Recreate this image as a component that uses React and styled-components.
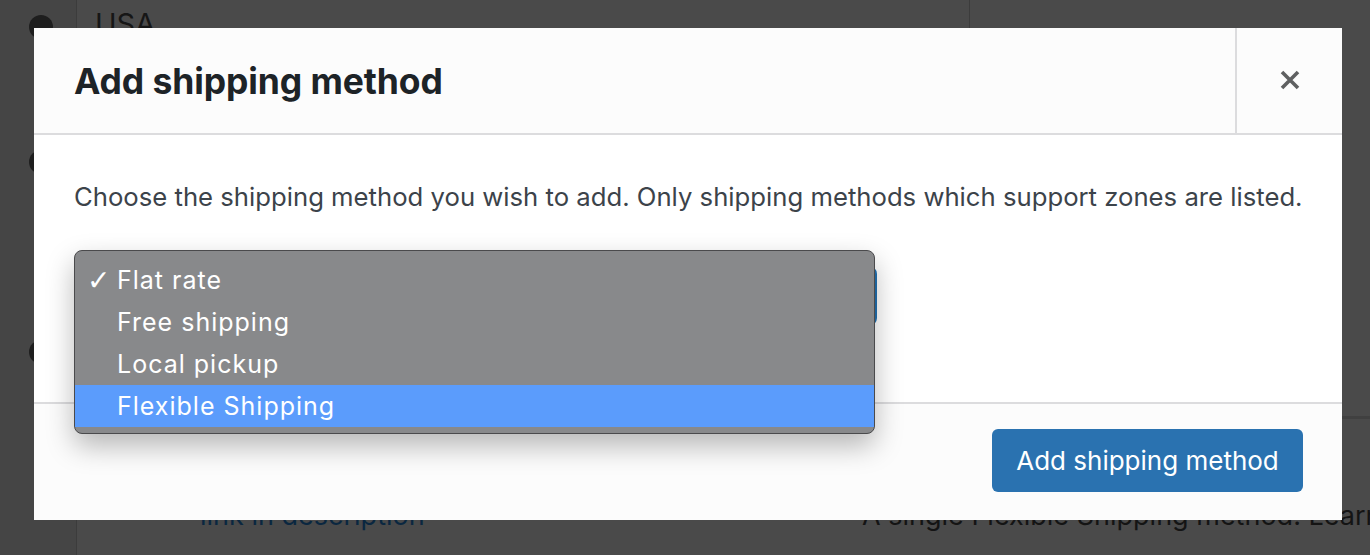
import styled, { createGlobalStyle } from "styled-components"

const GlobalStyle = createGlobalStyle`
  html, body {
    margin: 0;
    padding: 0;
    background: #4a4a4a;
  }
  body {
    font-family: Inter, "Noto Sans", sans-serif;
    width: 1370px;
    height: 555px;
    overflow: hidden;
  }
`

// dimmed admin page behind the modal
const Page = styled.div`
  position: relative;
  width: 1370px;
  height: 555px;
  display: flex;
  background: #4a4a4a;
  overflow: hidden;
`
const Gutter = styled.div`
  width: 77px;
  flex-shrink: 0;
  background: #454545;
  border-right: 1px solid #3c3c3c;
  display: flex;
  flex-direction: column;
  align-items: center;
  padding-top: 15px;
  box-sizing: border-box;
`
const HelpDot = styled.div`
  width: 24px;
  height: 24px;
  border-radius: 50%;
  background: #1e1e1e;
  margin: ${p => p.gap}px 0 0 5px;
`
const Table = styled.div`
  flex: 1;
  min-width: 0;
  display: flex;
  flex-direction: column;
`
const Row = styled.div`
  display: flex;
  height: ${p => p.h}px;
  border-bottom: ${p => (p.line ? "3px solid #404040" : "none")};
  box-sizing: border-box;
`
const Cell = styled.div`
  width: ${p => p.w || "auto"};
  flex: ${p => (p.w ? "none" : 1)};
  min-width: 0;
  padding: ${p => p.pad || "0"};
  border-right: ${p => (p.divider ? "1px solid #3c3c3c" : "none")};
  box-sizing: border-box;
  font-size: ${p => p.size || 27}px;
  color: ${p => p.color || "#161616"};
  white-space: nowrap;
  overflow: hidden;
`

// modal
const Modal = styled.div`
  position: absolute;
  left: 34px;
  top: 28px;
  width: 1308px;
  height: 492px;
  background: #fff;
  display: flex;
  flex-direction: column;
`
const Header = styled.div`
  height: 107px;
  display: flex;
  background: #fcfcfc;
  border-bottom: 2px solid #dcdcde;
  box-sizing: border-box;
`
const Title = styled.h1`
  flex: 1;
  margin: 0;
  padding-left: 40px;
  padding-top: 2px;
  display: flex;
  align-items: center;
  font-size: 35.5px;
  font-weight: 700;
  color: #1d2327;
  letter-spacing: -0.1px;
`
const CloseButton = styled.button`
  width: 107px;
  border: none;
  border-left: 2px solid #dcdcde;
  background: transparent;
  display: flex;
  align-items: center;
  justify-content: center;
  padding: 0 0 2px;
  cursor: pointer;
`
const Body = styled.div`
  position: relative;
  height: 267px;
  padding: 0 40px;
  box-sizing: border-box;
`
const Intro = styled.p`
  margin: 0;
  padding-top: 46px;
  font-size: 25.7px;
  line-height: 32px;
  color: #3c434a;
  white-space: nowrap;
`
const SelectBox = styled.div`
  margin-top: 53px;
  width: 803px;
  height: 60px;
  border: 2px solid #2271b1;
  border-radius: 8px;
  box-sizing: border-box;
`
const Popup = styled.ul`
  position: absolute;
  left: 40px;
  top: 115px;
  width: 801px;
  margin: 0;
  padding: 8px 0 6px;
  list-style: none;
  background: #88898b;
  border: 1px solid #4a4a4c;
  border-radius: 8px;
  box-sizing: border-box;
  box-shadow: 0 12px 28px rgba(0, 0, 0, 0.28);
  z-index: 2;
`
const Option = styled.li`
  height: 42px;
  display: flex;
  align-items: center;
  background: ${p => (p.active ? "#5b9cfc" : "transparent")};
  color: #fff;
  font-size: 25px;
  letter-spacing: 1px;
`
const Check = styled.span`
  width: 42px;
  padding-left: 12px;
  box-sizing: border-box;
  font-size: 28px;
  font-family: "DejaVu Sans", sans-serif;
  letter-spacing: 0;
`
const Footer = styled.div`
  flex: 1;
  background: #fcfcfc;
  border-top: 2px solid #dcdcde;
  display: flex;
  justify-content: flex-end;
  align-items: flex-start;
  padding: 25px 39px 0 0;
`
const PrimaryButton = styled.button`
  width: 311px;
  height: 63px;
  border: none;
  border-radius: 6px;
  background: #2a72b0;
  color: #fff;
  font-family: inherit;
  font-size: 26px;
  padding: 0;
  cursor: pointer;
`

const options = ["Flat rate", "Free shipping", "Local pickup", "Flexible Shipping"]

const App = () => {
  return (
    <>
      <GlobalStyle />
      <Page>
        <Gutter>
          <HelpDot gap={0} />
          <HelpDot gap={111} />
          <HelpDot gap={166} />
        </Gutter>
        <Table>
          <Row h={312}>
            <Cell w="893px" divider pad="6px 0 0 18px" size={29}>USA</Cell>
            <Cell />
          </Row>
          <Row h={107} line>
            <Cell />
          </Row>
          <Row h={136} line={false}>
            <Cell w="785px" pad="80px 0 0 123px" color="#0a2740">link in description</Cell>
            <Cell pad="80px 0 0 0" color="#141414">A single Flexible Shipping method. Learn more</Cell>
          </Row>
        </Table>

        <Modal>
          <Header>
            <Title>Add shipping method</Title>
            <CloseButton aria-label="Close">
              <svg width="22" height="22" viewBox="0 0 22 22">
                <path d="M3 3 L19 19 M19 3 L3 19" stroke="#5f6061" strokeWidth="3.6" strokeLinecap="butt" />
              </svg>
            </CloseButton>
          </Header>
          <Body>
            <Intro>Choose the shipping method you wish to add. Only shipping methods which support zones are listed.</Intro>
            <SelectBox />
            <Popup>
              {options.map((o, i) => (
                <Option key={o} active={i === 3}>
                  <Check>{i === 0 ? "✓" : ""}</Check>
                  {o}
                </Option>
              ))}
            </Popup>
          </Body>
          <Footer>
            <PrimaryButton>Add shipping method</PrimaryButton>
          </Footer>
        </Modal>
      </Page>
    </>
  )
}

export default App
